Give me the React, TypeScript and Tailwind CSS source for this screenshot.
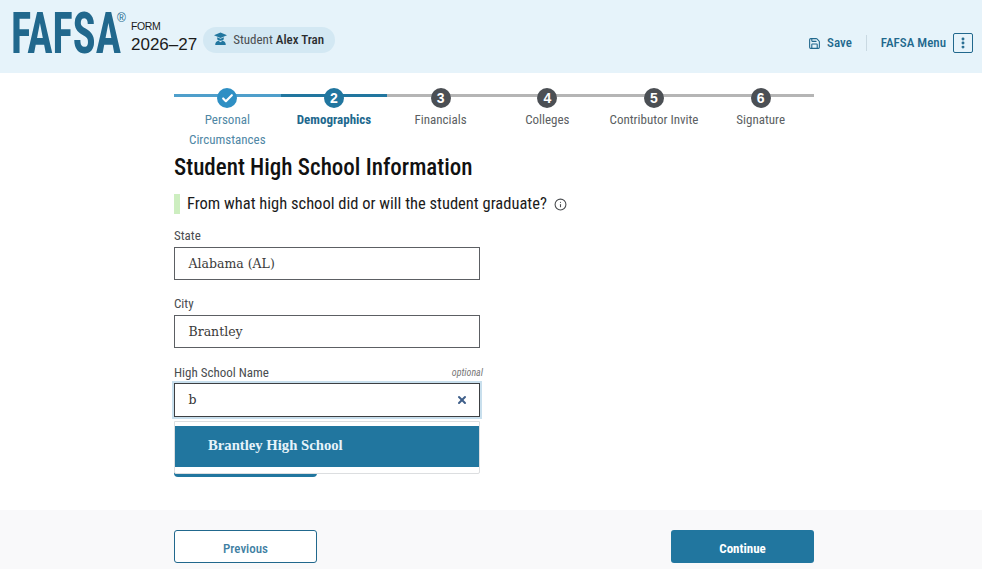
import React from "react";
import { Save, EllipsisVertical, Check, X, Info } from "lucide-react";

const narrow = "font-['Liberation_Sans_Narrow','Roboto_Condensed','Liberation_Sans',sans-serif]";
const slab = "font-['DejaVu_Serif',serif]";

const steps = [
  { n: 1, label: "Personal Circumstances", state: "done" },
  { n: 2, label: "Demographics", state: "current" },
  { n: 3, label: "Financials", state: "todo" },
  { n: 4, label: "Colleges", state: "todo" },
  { n: 5, label: "Contributor Invite", state: "todo" },
  { n: 6, label: "Signature", state: "todo" },
];

function Step({ n, label, state }: { n: number; label: string; state: string }) {
  const line = state === "done" ? "bg-[#4f9fcb]" : state === "current" ? "bg-[#21769f]" : "bg-[#b5b5b5]";
  const dot = state === "done" ? "bg-[#2e8fc4]" : state === "current" ? "bg-[#21769f]" : "bg-[#4b4f54]";
  const text =
    state === "done" ? "text-[#4f87a5]" : state === "current" ? "text-[#21688d] font-bold" : "text-[#5c5f63]";
  return (
    <div className="flex flex-col items-center">
      <div className="relative flex h-[20px] w-full items-center justify-center">
        <div className={`absolute inset-x-0 top-[6px] h-[3px] ${line}`} />
        <div className={`relative flex h-[20px] w-[20px] items-center justify-center rounded-full text-[14px] font-bold text-white ${dot}`}>
          {state === "done" ? <Check size={13} strokeWidth={4} /> : <span className="font-['Liberation_Sans',sans-serif]">{n}</span>}
        </div>
      </div>
      <div className={`mt-[2px] text-center text-[13px] leading-[20px] ${text} ${n === 1 ? "w-[90px]" : "whitespace-nowrap"}`}>{label}</div>
    </div>
  );
}

function Field({ label, value, mt, textTop }: { label: string; value: string; mt: string; textTop: string }) {
  return (
    <div className={mt}>
      <div className="h-[19px] text-[13px] leading-[15px] text-[#4a4d50]">{label}</div>
      <div className={`flex h-[33px] w-[306px] items-center border border-[#5c5f63] bg-white pl-[13.5px] text-[12.5px] text-[#3a3a3a] ${textTop} ${slab}`}>
        {value}
      </div>
    </div>
  );
}

export default function App() {
  return (
    <div className={`flex h-[569px] w-[982px] flex-col overflow-hidden bg-white ${narrow}`}>
      <header className="flex h-[73px] shrink-0 items-center justify-between bg-[#e6f3fa] pl-[11px] pr-[9px]">
        <div className="flex items-center">
          <div className="relative mb-[6px] h-[54px] w-[120px]">
            <span className="inline-block origin-left scale-x-[0.745] text-[57px] leading-[54px] font-bold text-[#21688d]">
              FAFSA
            </span>
            <span className="absolute top-[5px] left-[106px] font-['Liberation_Sans',sans-serif] text-[12px] leading-[12px] text-[#21688d]">®</span>
          </div>
          <div className="flex flex-col font-['Liberation_Sans',sans-serif]">
            <span className="text-[10.5px] leading-[15px] tracking-[-0.4px] text-[#1b1b1b]">FORM</span>
            <span className="text-[17px] leading-[21px] text-[#1b1b1b]">2026–27</span>
          </div>
          <div className="mt-[7px] ml-[6px] flex h-[26px] w-[132px] items-center rounded-full bg-[#d3e8f3] pl-[10px] text-[13px] text-[#4a4d50]">
            <svg width="15" height="14" viewBox="0 0 15 14" className="mr-[5px] -mt-[2px]" fill="#21769f">
              <path d="M7.5 0.5 14 3.2 7.5 6 1 3.2Z" />
              <path d="M4.2 5.2 7.5 6.7 10.8 5.2V6.6a3.3 2.2 0 0 1-6.6 0Z" />
              <path d="M2.2 13c0-2.6 1.4-3.8 3.2-4.2l2.1 1.4 2.1-1.4c1.8.4 3.2 1.6 3.2 4.2Z" />
            </svg>
            <span>Student&nbsp;<b className="font-medium text-[#2a2c2e]">Alex Tran</b></span>
          </div>
        </div>
        <div className="mt-[13px] flex items-center text-[13px] font-medium text-[#21688d]">
          <Save size={13} strokeWidth={2} className="mr-[6px]" />
          <span>Save</span>
          <div className="mx-[14px] h-[16px] w-px bg-[#c9d9e2]" />
          <span className="mr-[7px]">FAFSA Menu</span>
          <div className="flex h-[20px] w-[20px] items-center justify-center rounded-[2px] border border-[#21688d]">
            <EllipsisVertical size={14} strokeWidth={3} />
          </div>
        </div>
      </header>

      <main className="ml-[174px] w-[640px] flex-1">
        <div className="mt-[15px] grid grid-cols-6 items-start">
          {steps.map((s) => (
            <Step key={s.n} {...s} />
          ))}
        </div>
        <h1 className="mt-[2px] text-[23px] leading-[32px] font-medium text-[#111]">Student High School Information</h1>
        <div className="mt-[10px] flex h-[20px] items-center">
          <div className="h-[20px] w-[6px] bg-[#cdeec0]" />
          <span className="ml-[7px] text-[16.5px] font-normal text-[#1b1b1b]">From what high school did or will the student graduate?</span>
          <Info size={13} className="ml-[7px] text-[#4a4d50]" />
        </div>
        <Field label="State" value="Alabama (AL)" mt="mt-[14px]" textTop="pt-[1px]" />
        <Field label="City" value="Brantley" mt="mt-[16px]" textTop="pt-[2px]" />
        <div className="relative mt-[16px] h-[112px] w-[306px]">
          <div className="flex h-[19px] items-start justify-between text-[13px] leading-[18px] text-[#4a4d50]">
            <span>High School Name</span>
            <span className="relative left-[3px] top-[1px] text-[10px] italic leading-[16px] text-[#777]">optional</span>
          </div>
          <div className={`flex h-[34px] items-center justify-between border border-[#3c3f42] bg-white pl-[13.5px] pr-[11px] text-[12.5px] text-[#333] shadow-[0_0_0_2px_#c8dfed] ${slab}`}>
            <span>b</span>
            <X size={12} strokeWidth={4} className="text-[#3f5f8a]" />
          </div>
          <div className="mt-[27px] h-[33px] w-[143px] rounded-[4px] bg-[#21769f]" />
          <div className="absolute top-[57px] left-0 h-[53px] w-[306px] rounded-b-[2px] border border-[#dcdee0] bg-white pt-[4px]">
            <div className="h-[41px] bg-[#21769f] pl-[33px] font-['Liberation_Serif',serif] text-[14.7px] leading-[38px] font-bold text-[#e6f3fa]">
              Brantley High School
            </div>
          </div>
        </div>
      </main>

      <footer className="flex h-[59px] shrink-0 justify-between bg-[#f9f9fa] pt-[20px] pr-[168px] pl-[174px]">
        <button className="h-[33px] w-[143px] rounded-[3px] border border-[#21688d] bg-white pt-[4px] text-[13px] font-medium text-[#3f7fa3]">Previous</button>
        <button className="h-[33px] w-[143px] rounded-[3px] bg-[#21769f] pt-[4px] text-[13px] font-bold text-white">Continue</button>
      </footer>
    </div>
  );
}
